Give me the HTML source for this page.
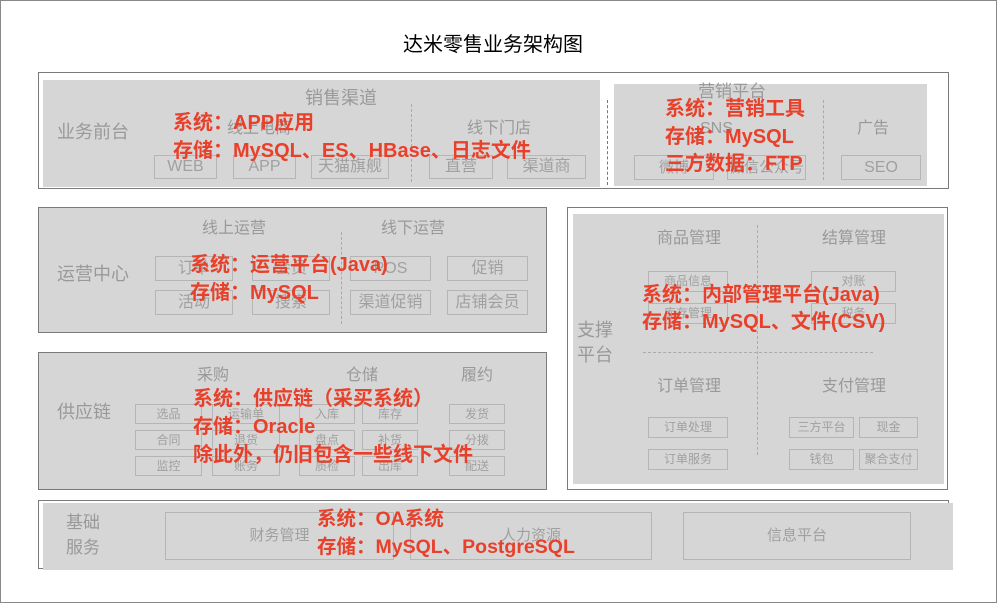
<!DOCTYPE html>
<html><head><meta charset="utf-8"><style>
*{margin:0;padding:0;box-sizing:border-box}
body{width:997px;height:603px;background:#fff;position:relative;overflow:hidden;font-family:"Liberation Sans","Noto Sans CJK SC",sans-serif}
div{position:absolute}
.o{border:1px solid #7a7a7a}
.f{background:#d6d6d6}
.g{color:#999;white-space:nowrap;line-height:1}
.b{border:1px solid #b5b5b5;color:#a0a0a0;text-align:center;white-space:nowrap}
.r{color:#e8402a;font-weight:bold;white-space:nowrap;line-height:1;font-size:20px}
.dv{border-left:1px dashed #aaa;width:0}
.dh{border-top:1px dashed #aaa;height:0}
</style></head><body>
<div style="left:0;top:0;width:997px;height:603px;border:1px solid #888"></div>
<div style="left:403px;top:28px;font-size:20px;color:#000;white-space:nowrap">达米零售业务架构图</div>

<!-- section 1 -->
<div class="o" style="left:38px;top:72px;width:911px;height:117px"></div>
<div class="f" style="left:43px;top:80px;width:557px;height:107px"></div>
<div class="f" style="left:614px;top:84px;width:313px;height:102px"></div>
<div class="dv" style="left:607px;top:100px;height:85px;border-color:#777"></div>
<div class="dv" style="left:411px;top:104px;height:78px"></div>
<div class="dv" style="left:823px;top:100px;height:80px"></div>
<div class="g" style="left:57px;top:123px;font-size:18px">业务前台</div>
<div class="g" style="left:305px;top:89px;font-size:18px">销售渠道</div>
<div class="g" style="left:227px;top:121px;font-size:16px">线上电商</div>
<div class="g" style="left:467px;top:121px;font-size:16px">线下门店</div>
<div class="b" style="left:154px;top:155px;width:63px;height:24px;font-size:16px;line-height:22px">WEB</div>
<div class="b" style="left:233px;top:155px;width:63px;height:24px;font-size:16px;line-height:22px">APP</div>
<div class="b" style="left:311px;top:155px;width:78px;height:24px;font-size:16px;line-height:22px">天猫旗舰</div>
<div class="b" style="left:429px;top:155px;width:64px;height:24px;font-size:16px;line-height:22px">直营</div>
<div class="b" style="left:507px;top:155px;width:79px;height:24px;font-size:16px;line-height:22px">渠道商</div>
<div class="g" style="left:698px;top:83px;font-size:17px">营销平台</div>
<div class="g" style="left:700px;top:121px;font-size:16px">SNS</div>
<div class="g" style="left:857px;top:121px;font-size:16px">广告</div>
<div class="b" style="left:634px;top:155px;width:80px;height:25px;font-size:15px;line-height:23px">微博</div>
<div class="b" style="left:727px;top:155px;width:79px;height:25px;font-size:15px;line-height:23px">微信公众号</div>
<div class="b" style="left:841px;top:155px;width:80px;height:25px;font-size:16px;line-height:23px">SEO</div>
<div class="r" style="left:173px;top:113px">系统：APP应用</div>
<div class="r" style="left:173px;top:141px">存储：MySQL、ES、HBase、日志文件</div>
<div class="r" style="left:665px;top:99px">系统：营销工具</div>
<div class="r" style="left:665px;top:127px">存储：MySQL</div>
<div class="r" style="left:665px;top:154px">三方数据：FTP</div>

<!-- section 2 -->
<div class="o f" style="left:38px;top:207px;width:509px;height:126px"></div>
<div class="dv" style="left:341px;top:232px;height:92px"></div>
<div class="g" style="left:57px;top:265px;font-size:18px">运营中心</div>
<div class="g" style="left:202px;top:221px;font-size:16px">线上运营</div>
<div class="g" style="left:381px;top:221px;font-size:16px">线下运营</div>
<div class="b" style="left:155px;top:256px;width:78px;height:25px;font-size:16px;line-height:23px">订单</div>
<div class="b" style="left:252px;top:256px;width:78px;height:25px;font-size:16px;line-height:23px">会员</div>
<div class="b" style="left:350px;top:256px;width:81px;height:25px;font-size:16px;line-height:23px">POS</div>
<div class="b" style="left:447px;top:256px;width:81px;height:25px;font-size:16px;line-height:23px">促销</div>
<div class="b" style="left:155px;top:290px;width:78px;height:25px;font-size:16px;line-height:23px">活动</div>
<div class="b" style="left:252px;top:290px;width:78px;height:25px;font-size:16px;line-height:23px">搜索</div>
<div class="b" style="left:350px;top:290px;width:81px;height:25px;font-size:16px;line-height:23px">渠道促销</div>
<div class="b" style="left:447px;top:290px;width:81px;height:25px;font-size:16px;line-height:23px">店铺会员</div>
<div class="r" style="left:190px;top:255px">系统：运营平台(Java)</div>
<div class="r" style="left:190px;top:283px">存储：MySQL</div>

<!-- section 3 -->
<div class="o f" style="left:38px;top:352px;width:509px;height:138px"></div>
<div class="g" style="left:57px;top:403px;font-size:18px">供应链</div>
<div class="g" style="left:197px;top:368px;font-size:16px">采购</div>
<div class="g" style="left:346px;top:368px;font-size:16px">仓储</div>
<div class="g" style="left:461px;top:368px;font-size:16px">履约</div>
<div class="b" style="left:135px;top:404px;width:67px;height:20px;font-size:12px;line-height:18px">选品</div>
<div class="b" style="left:135px;top:430px;width:67px;height:20px;font-size:12px;line-height:18px">合同</div>
<div class="b" style="left:135px;top:456px;width:67px;height:20px;font-size:12px;line-height:18px">监控</div>
<div class="b" style="left:212px;top:404px;width:68px;height:20px;font-size:12px;line-height:18px">运输单</div>
<div class="b" style="left:212px;top:430px;width:68px;height:20px;font-size:12px;line-height:18px">退货</div>
<div class="b" style="left:212px;top:456px;width:68px;height:20px;font-size:12px;line-height:18px">账务</div>
<div class="b" style="left:299px;top:404px;width:56px;height:20px;font-size:12px;line-height:18px">入库</div>
<div class="b" style="left:299px;top:430px;width:56px;height:20px;font-size:12px;line-height:18px">盘点</div>
<div class="b" style="left:299px;top:456px;width:56px;height:20px;font-size:12px;line-height:18px">质检</div>
<div class="b" style="left:362px;top:404px;width:56px;height:20px;font-size:12px;line-height:18px">库存</div>
<div class="b" style="left:362px;top:430px;width:56px;height:20px;font-size:12px;line-height:18px">补货</div>
<div class="b" style="left:362px;top:456px;width:56px;height:20px;font-size:12px;line-height:18px">出库</div>
<div class="b" style="left:449px;top:404px;width:56px;height:20px;font-size:12px;line-height:18px">发货</div>
<div class="b" style="left:449px;top:430px;width:56px;height:20px;font-size:12px;line-height:18px">分拨</div>
<div class="b" style="left:449px;top:456px;width:56px;height:20px;font-size:12px;line-height:18px">配送</div>
<div class="r" style="left:193px;top:389px">系统：供应链（采买系统）</div>
<div class="r" style="left:193px;top:417px">存储：Oracle</div>
<div class="r" style="left:193px;top:445px">除此外，仍旧包含一些线下文件</div>

<!-- section 4 -->
<div class="o" style="left:567px;top:207px;width:381px;height:283px"></div>
<div class="f" style="left:573px;top:214px;width:371px;height:270px"></div>
<div class="dv" style="left:757px;top:225px;height:230px"></div>
<div class="dh" style="left:643px;top:352px;width:230px"></div>
<div class="g" style="left:577px;top:321px;font-size:18px">支撑</div>
<div class="g" style="left:577px;top:346px;font-size:18px">平台</div>
<div class="g" style="left:657px;top:231px;font-size:16px">商品管理</div>
<div class="g" style="left:822px;top:231px;font-size:16px">结算管理</div>
<div class="g" style="left:657px;top:379px;font-size:16px">订单管理</div>
<div class="g" style="left:822px;top:379px;font-size:16px">支付管理</div>
<div class="b" style="left:648px;top:271px;width:80px;height:21px;font-size:12px;line-height:19px">商品信息</div>
<div class="b" style="left:648px;top:303px;width:80px;height:21px;font-size:12px;line-height:19px">库存管理</div>
<div class="b" style="left:811px;top:271px;width:85px;height:21px;font-size:12px;line-height:19px">对账</div>
<div class="b" style="left:811px;top:303px;width:85px;height:21px;font-size:12px;line-height:19px">税务</div>
<div class="b" style="left:648px;top:417px;width:80px;height:21px;font-size:12px;line-height:19px">订单处理</div>
<div class="b" style="left:648px;top:449px;width:80px;height:21px;font-size:12px;line-height:19px">订单服务</div>
<div class="b" style="left:789px;top:417px;width:65px;height:21px;font-size:12px;line-height:19px">三方平台</div>
<div class="b" style="left:859px;top:417px;width:59px;height:21px;font-size:12px;line-height:19px">现金</div>
<div class="b" style="left:789px;top:449px;width:65px;height:21px;font-size:12px;line-height:19px">钱包</div>
<div class="b" style="left:859px;top:449px;width:59px;height:21px;font-size:12px;line-height:19px">聚合支付</div>
<div class="r" style="left:642px;top:285px">系统：内部管理平台(Java)</div>
<div class="r" style="left:642px;top:312px">存储：MySQL、文件(CSV)</div>

<!-- section 5 -->
<div class="o" style="left:38px;top:500px;width:911px;height:69px"></div>
<div class="f" style="left:43px;top:503px;width:910px;height:67px"></div>
<div class="g" style="left:66px;top:514px;font-size:17px">基础</div>
<div class="g" style="left:66px;top:539px;font-size:17px">服务</div>
<div class="b" style="left:165px;top:512px;width:229px;height:48px;font-size:15px;line-height:46px">财务管理</div>
<div class="b" style="left:410px;top:512px;width:242px;height:48px;font-size:15px;line-height:46px">人力资源</div>
<div class="b" style="left:683px;top:512px;width:228px;height:48px;font-size:15px;line-height:46px">信息平台</div>
<div class="r" style="left:317px;top:510px;font-size:19.5px">系统：OA系统</div>
<div class="r" style="left:317px;top:538px;font-size:19.5px">存储：MySQL、PostgreSQL</div>
</body></html>
